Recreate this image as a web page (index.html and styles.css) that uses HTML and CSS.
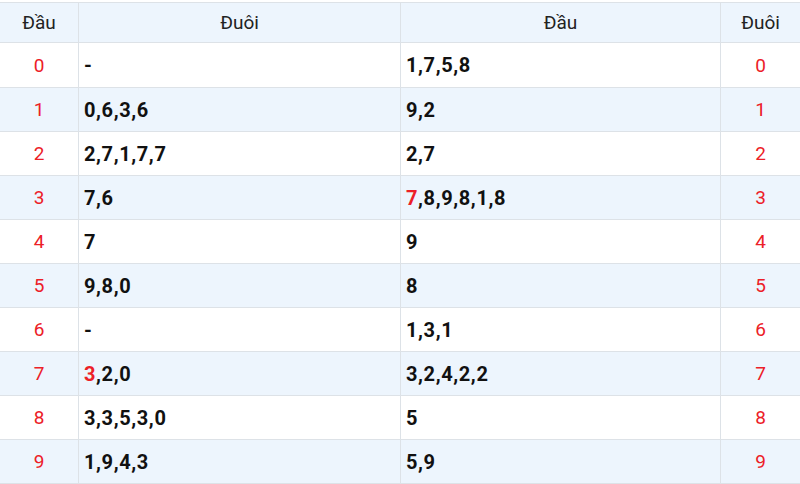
FILE: index.html
```html
<!DOCTYPE html>
<html lang="vi">
<head>
<meta charset="utf-8">
<link rel="stylesheet" href="styles.css">
</head>
<body>
<table class="loto">
  <colgroup>
    <col class="c-num"><col class="c-list"><col class="c-list2"><col class="c-num2">
  </colgroup>
  <thead>
    <tr><th>Đầu</th><th>Đuôi</th><th>Đầu</th><th>Đuôi</th></tr>
  </thead>
  <tbody>
    <tr class="first"><td class="num">0</td><td class="list">-</td><td class="list">1,7,5,8</td><td class="num">0</td></tr>
    <tr class="alt"><td class="num">1</td><td class="list">0,6,3,6</td><td class="list">9,2</td><td class="num">1</td></tr>
    <tr><td class="num">2</td><td class="list">2,7,1,7,7</td><td class="list">2,7</td><td class="num">2</td></tr>
    <tr class="alt"><td class="num">3</td><td class="list">7,6</td><td class="list"><span class="hl">7</span>,8,9,8,1,8</td><td class="num">3</td></tr>
    <tr><td class="num">4</td><td class="list">7</td><td class="list">9</td><td class="num">4</td></tr>
    <tr class="alt"><td class="num">5</td><td class="list">9,8,0</td><td class="list">8</td><td class="num">5</td></tr>
    <tr><td class="num">6</td><td class="list">-</td><td class="list">1,3,1</td><td class="num">6</td></tr>
    <tr class="alt"><td class="num">7</td><td class="list"><span class="hl">3</span>,2,0</td><td class="list">3,2,4,2,2</td><td class="num">7</td></tr>
    <tr><td class="num">8</td><td class="list">3,3,5,3,0</td><td class="list">5</td><td class="num">8</td></tr>
    <tr class="alt"><td class="num">9</td><td class="list">1,9,4,3</td><td class="list">5,9</td><td class="num">9</td></tr>
  </tbody>
</table>
</body>
</html>
```
FILE: styles.css
```css
html, body {
  margin: 0;
  padding: 0;
  background: #ffffff;
}
body {
  padding-top: 2px;
  font-family: Roboto, "Liberation Sans", Arial, sans-serif;
}
.loto {
  width: 801px;
  margin-left: -1px;
  border-collapse: collapse;
  table-layout: fixed;
}
.c-num { width: 79px; }
.c-list { width: 322px; }
.c-list2 { width: 320px; }
.c-num2 { width: 80px; }
.loto th, .loto td {
  border: 1px solid #dde2e7;
  padding: 0 5px;
}
.loto th {
  height: 39px;
  background: #edf5fd;
  font-weight: 400;
  font-size: 19px;
  color: #222222;
  text-align: center;
}
.loto td {
  height: 43px;
}
.loto tr.first td {
  height: 44px;
}
.loto tr.alt td {
  background: #edf5fd;
}
.num {
  text-align: center;
  color: #ec2027;
  font-size: 19px;
}
.list {
  text-align: left;
  font-weight: 700;
  font-size: 20px;
  color: #111111;
  letter-spacing: 0.6px;
}
.hl {
  color: #ec2027;
}
```
